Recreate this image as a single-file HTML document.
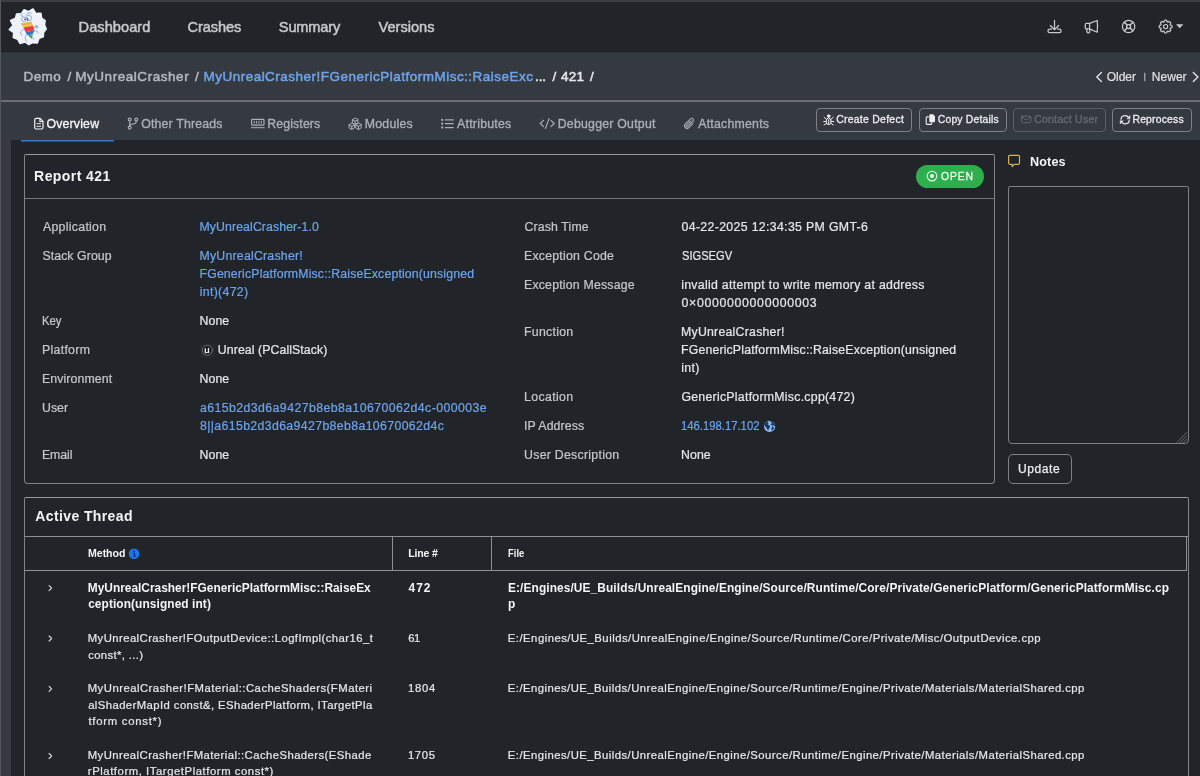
<!DOCTYPE html>
<html lang="en">
<head>
<meta charset="utf-8">
<title>Report 421 - MyUnrealCrasher</title>
<style>
*{box-sizing:border-box;margin:0;padding:0}
html,body{width:1200px;height:776px;overflow:hidden;background:#212529;font-family:"Liberation Sans",sans-serif}
body{position:relative}
#wrap{position:absolute;left:0;top:0;width:1200px;height:776px;will-change:transform;overflow:hidden}
.b{position:absolute}
.t{position:absolute;transform-origin:0 0;white-space:pre;line-height:1;font-family:"Liberation Sans",sans-serif}
svg{position:absolute;overflow:visible}
#nav{left:0;top:0;width:1200px;height:52px;background:#212529}
#crumb{left:0;top:52px;width:1200px;height:48px;background:#353a40}
#crumbline{left:0;top:100px;width:1200px;height:2px;background:#6b6f74}
#tabs{left:0;top:102px;width:1200px;height:38px;background:#353a40}
#leftstrip{left:0;top:140px;width:11px;height:636px;background:#353a40}
#frametop{left:0;top:0;width:1200px;height:2px;background:#3a3d42}
#frameleft{left:0;top:0;width:1px;height:776px;background:#53575b}
#tabline{left:21px;top:140px;width:93px;height:2px;background:linear-gradient(#3a76cc 0,#3a76cc 50%,#214f97 50%,#214f97 100%)}
.btn{position:absolute;border:1px solid #7d8287;border-radius:4px;background:transparent;appearance:none;-webkit-appearance:none;padding:0;margin:0;display:block;outline:0;box-shadow:none}
.card{position:absolute;border:1px solid #80848a;border-top-color:#979b9f;border-radius:2px 2px 4px 4px}
.hl{position:absolute;height:1px;background:#74787d}
.vl{position:absolute;width:1px;background:#8d9196}
</style>
</head>
<body>
<div id="wrap">
<div class="b" id="nav"></div>
<div class="b" id="crumb"></div>
<div class="b" style="left:0;top:52px;width:1200px;height:1px;background:#2b3035"></div>
<div class="b" id="crumbline"></div>
<div class="b" id="tabs"></div>
<div class="b" id="leftstrip"></div>
<div class="b" id="tabline"></div>
<div class="b" id="frametop"></div>
<div class="b" id="frameleft"></div>

<!-- toolbar buttons -->
<button type="button" class="btn" style="left:816px;top:108px;width:96px;height:24px"></button>
<button type="button" class="btn" style="left:919px;top:108px;width:88px;height:24px"></button>
<button type="button" class="btn" style="left:1013px;top:108px;width:93px;height:24px;border-color:#5a5f65"></button>
<button type="button" class="btn" style="left:1112px;top:108px;width:80px;height:24px"></button>

<!-- report card -->
<div class="card" style="left:24px;top:154px;width:971px;height:330px"></div>
<div class="hl" style="left:25px;top:198px;width:969px"></div>
<div class="b" style="left:916px;top:165px;width:68px;height:23px;border-radius:12px;background:#2fae4e"></div>

<!-- notes -->
<textarea class="card" style="left:1008px;top:186px;width:181px;height:258px;border-color:#7d8186;background:transparent;resize:none;outline:0;padding:0;margin:0;display:block;appearance:none;-webkit-appearance:none;overflow:hidden;color:#e4e7ea"></textarea>
<button type="button" class="btn" style="left:1008px;top:454px;width:64px;height:30px;border-radius:5px"></button>

<!-- active thread card -->
<div class="card" style="left:24px;top:497px;width:1165px;height:300px"></div>
<div class="hl" style="left:25px;top:535.5px;width:1163px;background:#8d9196"></div>
<div class="hl" style="left:25px;top:570px;width:1162px;background:#8d9196"></div>
<div class="vl" style="left:392px;top:536px;height:34px"></div>
<div class="vl" style="left:491px;top:536px;height:34px"></div>
<div class="vl" style="left:1186px;top:536px;height:34px"></div>

<svg width="60" height="52" viewBox="0 0 60 52" style="left:0;top:0">
<path d="M24.1 9.7 L28.5 11.7 L33.0 9.0 L35.7 13.5 L40.8 13.2 L41.6 18.1 L45.1 20.7 L44.5 25.0 L46.2 28.9 L43.5 32.4 L43.3 36.8 L39.0 38.3 L37.3 42.9 L32.7 42.6 L28.7 44.5 L25.0 41.9 L20.0 43.4 L17.7 39.2 L13.3 37.5 L13.8 32.6 L9.3 29.5 L13.2 25.3 L10.6 20.5 L15.6 18.3 L16.6 14.0 L21.3 13.6Z" fill="#eef3fb" stroke="#eef3fb" stroke-width="1.6" stroke-linejoin="round"/>
<g fill="none" stroke="#6f8fd6" stroke-width="0.7" stroke-linecap="round" stroke-linejoin="round">
<path d="M23.6 29L20.3 32.2L21.600 35.2M26.400 34L25.200 38L26.300 41.200M33.800 27.500L36.400 25.600L37.300 27.800M34.200 30.800L37.200 31L38.400 33.300M31.600 36.500L33.800 39.500M22.800 16.500L20.600 14.600L21.800 13.600M26.600 15.300L28 12.800L31.200 13.200"/>
<path d="M36.400 25.600a1.300 1.300 0 1 0 .1 0"/>
</g>
<path d="M20.6 23.200L31.200 21.400L33.200 25.800L23.400 27.600Z" fill="#f0c24a"/>
<path d="M21.500 24.600L32 22.900" stroke="#e8a33a" stroke-width="0.8" fill="none"/>
<path d="M23.400 27.600L33.200 25.800L34.300 30.200L25.600 32.200Z" fill="#e2423f"/>
<path d="M25.600 32.200L34.300 30.200L33.200 33.600L28 35.500Z" fill="#2f73c9"/>
<path d="M28.200 35.600L33 33.800L31.600 39Z" fill="#3fae4f"/>
<circle cx="23.900" cy="19.300" r="2.300" fill="#ffffff" stroke="#5f86cf" stroke-width="0.7"/>
<circle cx="28.900" cy="18.100" r="2.600" fill="#ffffff" stroke="#5f86cf" stroke-width="0.7"/>
<circle cx="24.900" cy="19.200" r="0.800" fill="#1f3f7a"/><circle cx="27.800" cy="18.900" r="0.800" fill="#1f3f7a"/>
<path d="M26.300 20.200L28 20L27.300 21.600Z" fill="#d8443f"/>
</svg>
<svg width="1200" height="776" viewBox="0 0 1200 776" style="left:0;top:0" fill="none" stroke-linecap="round" stroke-linejoin="round">
<g stroke="#c6c9cc" stroke-width="1.25">
<path d="M1054.5 20.4V29.4M1050.3 25.5L1054.5 29.7L1058.7 25.5"/>
<path d="M1051.4 29.2H1049.7a1.75 1.75 0 0 0 0 3.5h9.6a1.75 1.75 0 0 0 0-3.5H1057.6"/>
<path d="M1097.2 20.5C1097.6 24 1097.6 28.5 1097.2 32.2L1089.6 28.9H1086.3a1 1 0 0 1-1-1V24.3a1 1 0 0 1 1-1H1089.6Z"/>
<path d="M1089.6 23.5V28.8M1086.9 29V31.8a1 1 0 0 0 1 1h0.8a1 1 0 0 0 1-1V29.2"/>
<circle cx="1128.6" cy="26.5" r="6.2"/><circle cx="1128.6" cy="26.5" r="2"/>
<path d="M1124.3 22.2L1127.1 25M1132.9 22.2L1130.1 25M1124.3 30.8L1127.1 28M1132.9 30.8L1130.1 28" stroke-width="1.6"/>
<path d="M1165.60 20.20 L1165.77 20.20 L1165.93 20.21 L1166.10 20.22 L1166.27 20.24 L1166.43 20.27 L1166.60 20.32 L1166.74 20.43 L1166.86 20.69 L1166.91 21.13 L1166.96 21.53 L1167.03 21.76 L1167.14 21.88 L1167.25 21.95 L1167.37 22.00 L1167.48 22.05 L1167.60 22.10 L1167.73 22.14 L1167.86 22.17 L1168.01 22.16 L1168.22 22.06 L1168.54 21.80 L1168.89 21.53 L1169.16 21.43 L1169.34 21.45 L1169.49 21.53 L1169.62 21.63 L1169.76 21.73 L1169.88 21.84 L1170.00 21.96 L1170.13 22.07 L1170.24 22.20 L1170.36 22.32 L1170.47 22.44 L1170.57 22.58 L1170.67 22.71 L1170.75 22.86 L1170.77 23.04 L1170.67 23.31 L1170.40 23.66 L1170.14 23.98 L1170.04 24.19 L1170.03 24.34 L1170.06 24.47 L1170.10 24.60 L1170.15 24.72 L1170.20 24.83 L1170.25 24.95 L1170.32 25.06 L1170.44 25.17 L1170.67 25.24 L1171.07 25.29 L1171.51 25.34 L1171.77 25.46 L1171.88 25.60 L1171.93 25.77 L1171.96 25.93 L1171.98 26.10 L1171.99 26.27 L1172.00 26.43 L1172.00 26.60 L1172.00 26.77 L1171.99 26.93 L1171.98 27.10 L1171.96 27.27 L1171.93 27.43 L1171.88 27.60 L1171.77 27.74 L1171.51 27.86 L1171.07 27.91 L1170.67 27.96 L1170.44 28.03 L1170.32 28.14 L1170.25 28.25 L1170.20 28.37 L1170.15 28.48 L1170.10 28.60 L1170.06 28.73 L1170.03 28.86 L1170.04 29.01 L1170.14 29.22 L1170.40 29.54 L1170.67 29.89 L1170.77 30.16 L1170.75 30.34 L1170.67 30.49 L1170.57 30.62 L1170.47 30.76 L1170.36 30.88 L1170.24 31.00 L1170.13 31.13 L1170.00 31.24 L1169.88 31.36 L1169.76 31.47 L1169.62 31.57 L1169.49 31.67 L1169.34 31.75 L1169.16 31.77 L1168.89 31.67 L1168.54 31.40 L1168.22 31.14 L1168.01 31.04 L1167.86 31.03 L1167.73 31.06 L1167.60 31.10 L1167.48 31.15 L1167.37 31.20 L1167.25 31.25 L1167.14 31.32 L1167.03 31.44 L1166.96 31.67 L1166.91 32.07 L1166.86 32.51 L1166.74 32.77 L1166.60 32.88 L1166.43 32.93 L1166.27 32.96 L1166.10 32.98 L1165.93 32.99 L1165.77 33.00 L1165.60 33.00 L1165.43 33.00 L1165.27 32.99 L1165.10 32.98 L1164.93 32.96 L1164.77 32.93 L1164.60 32.88 L1164.46 32.77 L1164.34 32.51 L1164.29 32.07 L1164.24 31.67 L1164.17 31.44 L1164.06 31.32 L1163.95 31.25 L1163.83 31.20 L1163.72 31.15 L1163.60 31.10 L1163.47 31.06 L1163.34 31.03 L1163.19 31.04 L1162.98 31.14 L1162.66 31.40 L1162.31 31.67 L1162.04 31.77 L1161.86 31.75 L1161.71 31.67 L1161.58 31.57 L1161.44 31.47 L1161.32 31.36 L1161.20 31.24 L1161.07 31.13 L1160.96 31.00 L1160.84 30.88 L1160.73 30.76 L1160.63 30.62 L1160.53 30.49 L1160.45 30.34 L1160.43 30.16 L1160.53 29.89 L1160.80 29.54 L1161.06 29.22 L1161.16 29.01 L1161.17 28.86 L1161.14 28.73 L1161.10 28.60 L1161.05 28.48 L1161.00 28.37 L1160.95 28.25 L1160.88 28.14 L1160.76 28.03 L1160.53 27.96 L1160.13 27.91 L1159.69 27.86 L1159.43 27.74 L1159.32 27.60 L1159.27 27.43 L1159.24 27.27 L1159.22 27.10 L1159.21 26.93 L1159.20 26.77 L1159.20 26.60 L1159.20 26.43 L1159.21 26.27 L1159.22 26.10 L1159.24 25.93 L1159.27 25.77 L1159.32 25.60 L1159.43 25.46 L1159.69 25.34 L1160.13 25.29 L1160.53 25.24 L1160.76 25.17 L1160.88 25.06 L1160.95 24.95 L1161.00 24.83 L1161.05 24.72 L1161.10 24.60 L1161.14 24.47 L1161.17 24.34 L1161.16 24.19 L1161.06 23.98 L1160.80 23.66 L1160.53 23.31 L1160.43 23.04 L1160.45 22.86 L1160.53 22.71 L1160.63 22.58 L1160.73 22.44 L1160.84 22.32 L1160.96 22.20 L1161.07 22.07 L1161.20 21.96 L1161.32 21.84 L1161.44 21.73 L1161.58 21.63 L1161.71 21.53 L1161.86 21.45 L1162.04 21.43 L1162.31 21.53 L1162.66 21.80 L1162.98 22.06 L1163.19 22.16 L1163.34 22.17 L1163.47 22.14 L1163.60 22.10 L1163.72 22.05 L1163.83 22.00 L1163.95 21.95 L1164.06 21.88 L1164.17 21.76 L1164.24 21.53 L1164.29 21.13 L1164.34 20.69 L1164.46 20.43 L1164.60 20.32 L1164.77 20.27 L1164.93 20.24 L1165.10 20.22 L1165.27 20.21 L1165.43 20.20Z" stroke-width="1.2"/><circle cx="1165.6" cy="26.6" r="2.1" stroke-width="1.2"/>
</g>
<path d="M1176 24.2H1183.4L1179.7 28.2Z" fill="#c6c9cc"/>
<g stroke="#dfe2e5" stroke-width="1.4"><path d="M1101.4 72.4L1096.8 77L1101.4 81.6"/><path d="M1193.3 72.4L1197.9 77L1193.3 81.6"/></g>
<path d="M1144.8 73.2V80.8" stroke="#c4c8cc" stroke-width="1"/>
<g stroke="#f4f5f6" stroke-width="1.2">
<path d="M36.2 118.4H40.1L43 121.3V127.5a1.5 1.5 0 0 1-1.5 1.5H36.2a1.5 1.5 0 0 1-1.5-1.5V119.9a1.5 1.5 0 0 1 1.5-1.5Z"/>
<path d="M39.9 118.6V121.5H42.8" stroke-width="1.1"/><path d="M37 123.600H40.700M37 126.300H40.700" stroke-width="0.9"/>
</g>
<g stroke="#aab0b7" stroke-width="1.15">
<circle cx="129.7" cy="119.5" r="1.45"/><circle cx="136.3" cy="119.5" r="1.45"/><circle cx="129.7" cy="127.6" r="1.45"/>
<path d="M129.7 121V126.1M136.3 121C136.3 123.4 134.6 123.9 132.9 124C131 124.1 129.9 124.6 129.7 126"/>
<rect x="251.6" y="119.300" width="12.4" height="5.800" rx="0.9"/>
<path d="M254.2 121.200V123.300M256.6 121.200V123.300M259 121.200V123.300M261.4 121.200V123.300M251.400 127.700H264.200" stroke-width="1"/>
<path d="M355.10 118.15 L352.37 119.72 L352.37 122.88 L355.10 124.45 L357.83 122.88 L357.83 119.72Z M355.10 121.30 L352.37 119.72 M355.10 121.30 L357.83 119.72 M355.10 121.30 L355.10 124.45" stroke-width="1"/>
<path d="M351.75 123.20 L349.02 124.77 L349.02 127.92 L351.75 129.50 L354.48 127.92 L354.48 124.77Z M351.75 126.35 L349.02 124.77 M351.75 126.35 L354.48 124.77 M351.75 126.35 L351.75 129.50" stroke-width="1"/>
<path d="M358.45 123.20 L355.72 124.77 L355.72 127.92 L358.45 129.50 L361.18 127.92 L361.18 124.77Z M358.45 126.35 L355.72 124.77 M358.45 126.35 L361.18 124.77 M358.45 126.35 L358.45 129.50" stroke-width="1"/>
<path d="M445.4 119.9H453.2M445.4 123.7H453.2M445.4 127.5H453.2" stroke-width="1.25"/>
<path d="M543.6 120.4L540.3 123.5L543.6 126.6M550.9 120.4L554.2 123.5L550.9 126.6M549 118.6L545.5 128.4" stroke-width="1.2"/>
</g>
<g fill="#aab0b7"><circle cx="442.2" cy="119.9" r="1.15"/><circle cx="442.2" cy="123.7" r="1.15"/><circle cx="442.2" cy="127.5" r="1.15"/></g>
<path transform="translate(689.4 123.5) rotate(45) scale(0.84) translate(-8 -8)" fill="#aab0b7" stroke="#aab0b7" stroke-width="0.35" d="M4.5 3a2.5 2.5 0 0 1 5 0v9a1.5 1.5 0 0 1-3 0V5a.5.5 0 0 1 1 0v7a.5.5 0 0 0 1 0V3a1.5 1.5 0 1 0-3 0v9a2.5 2.5 0 0 0 5 0V5a.5.5 0 0 1 1 0v7a3.5 3.5 0 1 1-7 0z"/>
<g stroke="#eceef0" stroke-width="1">
<circle cx="828.7" cy="116.1" r="1.3" fill="#eceef0"/>
<ellipse cx="828.7" cy="121.3" rx="2.5" ry="3.3"/>
<path d="M828.7 119.6V124.4M826.4 119.4L824.1 117.2M826.2 121.5H823.7M826.5 123.4L824.1 125M831 119.4L833.3 117.2M831.2 121.5H833.7M830.9 123.4L833.3 125"/>
<path d="M928.3 116.9H927.2a1 1 0 0 0-1 1V123.4a1 1 0 0 0 1 1H930.7a1 1 0 0 0 1-1V122.9" stroke-width="1.1"/>
</g>
<path d="M930.2 114.3H933L935 116.3V121.3a.9.9 0 0 1-.9.9H930.2a.9.9 0 0 1-.9-.9V115.2a.9.9 0 0 1 .9-.9Z" fill="#eceef0"/>
<g stroke="#656a70" stroke-width="1"><rect x="1021.4" y="116.1" width="9.5" height="6.6" rx="1.1"/><path d="M1021.7 117L1026.15 120L1030.6 117"/></g>
<g stroke="#eceef0" stroke-width="1.15"><path d="M1121 119.3A4 3.6 0 0 1 1128.4 117.3"/><path d="M1129.2 120.2A4 3.6 0 0 1 1121.8 122.2"/></g>
<path d="M1127.3 118.6L1130 115.6V118.6Z" fill="#eceef0" stroke="#eceef0" stroke-width="0.5"/>
<path d="M1122.9 120.9L1120.2 123.9V120.9Z" fill="#eceef0" stroke="#eceef0" stroke-width="0.5"/>
<circle cx="932" cy="176.1" r="4.8" stroke="#e3f6e8" stroke-width="1.1"/><circle cx="932" cy="176.1" r="2.1" fill="#e3f6e8"/>
<path d="M1009.8 155.3H1018.3a1.2 1.2 0 0 1 1.2 1.2V163.1a1.2 1.2 0 0 1-1.2 1.2H1014.1L1012.2 166.6L1012.1 164.3H1009.8a1.2 1.2 0 0 1-1.2-1.2V156.5a1.2 1.2 0 0 1 1.2-1.2Z" stroke="#d9b05a" stroke-width="1.2"/>
<rect x="200.3" y="343.6" width="13.8" height="13.8" fill="#262a2e" rx="1"/>
<circle cx="207.25" cy="350.3" r="5" fill="#16181b" stroke="#7d8185" stroke-width="0.8"/>
<path d="M204.7 348.6L205.9 347.9V351.6c0 .9 1.3 .9 1.9 .1V348.3l1.3-.6V352l.7 .3-1.7 1-.3-.6c-1 .8-3.2 .9-3.2-1V348.9Z" fill="#f2f2f2"/>
<circle cx="769.6" cy="426.4" r="5.6" fill="#8ebcf2"/>
<path d="M767.2 422.1c1 .2 1.2 1 .6 1.6-.8.7-.2 1.4.7 1.5 1 .2 1.6 1 1 2-.5.9-1 1.6-1.3 2.6-1.2-.4-1-1.700-1.6-2.500-.7-.9-2-1-1.900-2.300.1-1.200 1.200-2.300 2.500-2.900Z" fill="#17345f" stroke="#17345f" stroke-width="0.7" stroke-linejoin="round"/>
<path d="M770.5 421.2c.3.700 1.400.6 1.600 1.500.2 1-.9 1-1 1.800 0 .7.900.7 1.500.6.800-.1 1.500.3 1.900 1 .3-1.900-1.200-4.300-4-4.900Z" fill="#17345f" stroke="#17345f" stroke-width="0.7" stroke-linejoin="round"/>
<path d="M772.400 427c.7 0 1.200.5 1.100 1.200-.2.900-.9 1.500-1.700 1.900-.2-1 .1-2 .6-3.100Z" fill="#17345f" stroke="#17345f" stroke-width="0.7" stroke-linejoin="round"/>
<circle cx="134" cy="553.8" r="5.3" fill="#1b77ee"/>
<circle cx="134" cy="551.3" r="0.8" fill="#14233d"/><path d="M133 553.100H134.700V556.200M133 556.400H135.400" stroke="#14233d" stroke-width="0.9" stroke-linecap="butt"/>
<g stroke="#d5d8db" stroke-width="1.15">
<path d="M49.1 585.6L51.6 588.1L49.1 590.6"/>
<path d="M49.1 636.0L51.6 638.5L49.1 641.0"/>
<path d="M49.1 686.3L51.6 688.8L49.1 691.3"/>
<path d="M49.1 753.5L51.6 756.0L49.1 758.5"/>
</g>
<path d="M1186.8 432.4L1177 442.6M1186.8 435.8L1180.200 442.600M1186.8 439.200L1183.500 442.600" stroke="#8a8e93" stroke-width="0.7"/>
</svg>

<a class="t" style="left:78.56px;top:20px;font-size:14.6px;color:#c6c8ca;-webkit-text-stroke:0.5px #c6c8ca;letter-spacing:0.054px;">Dashboard</a>
<a class="t" style="left:187.62px;top:20px;font-size:14.6px;color:#c6c8ca;-webkit-text-stroke:0.5px #c6c8ca;letter-spacing:-0.121px;">Crashes</a>
<a class="t" style="left:278.84px;top:20px;font-size:14.6px;color:#c6c8ca;-webkit-text-stroke:0.5px #c6c8ca;letter-spacing:-0.168px;">Summary</a>
<a class="t" style="left:378.50px;top:20px;font-size:14.6px;color:#c6c8ca;-webkit-text-stroke:0.5px #c6c8ca;letter-spacing:0.008px;">Versions</a>
<a class="t" style="left:23.45px;top:70px;font-size:13.5px;color:#b4b9bf;-webkit-text-stroke:0.5px #b4b9bf;letter-spacing:0.464px;">Demo</a>
<a class="t" style="left:67.50px;top:70px;font-size:13.5px;color:#b4b9bf;-webkit-text-stroke:0.5px #b4b9bf;">/</a>
<a class="t" style="left:75.20px;top:70px;font-size:13.5px;color:#b4b9bf;-webkit-text-stroke:0.5px #b4b9bf;letter-spacing:0.549px;">MyUnrealCrasher</a>
<a class="t" style="left:195.00px;top:70px;font-size:13.5px;color:#b4b9bf;-webkit-text-stroke:0.5px #b4b9bf;">/</a>
<a class="t" style="left:203.45px;top:70px;font-size:13.5px;color:#6ea3e9;-webkit-text-stroke:0.5px #6ea3e9;letter-spacing:0.490px;">MyUnrealCrasher!FGenericPlatformMisc::RaiseExc</a>
<a class="t" style="left:534.95px;top:70px;font-size:13.5px;color:#e4e7ea;-webkit-text-stroke:0.5px #e4e7ea;letter-spacing:-0.039px;">...</a>
<a class="t" style="left:552.50px;top:70px;font-size:13.5px;color:#e4e7ea;-webkit-text-stroke:0.5px #e4e7ea;">/</a>
<a class="t" style="left:561.04px;top:70px;font-size:13.5px;color:#e4e7ea;-webkit-text-stroke:0.5px #e4e7ea;letter-spacing:0.167px;">421</a>
<a class="t" style="left:590.00px;top:70px;font-size:13.5px;color:#e4e7ea;-webkit-text-stroke:0.5px #e4e7ea;">/</a>
<a class="t" style="left:1106.75px;top:71px;font-size:12px;color:#dfe2e5;-webkit-text-stroke:0.2px #dfe2e5;letter-spacing:-0.024px;">Older</a>
<a class="t" style="left:1151.75px;top:71px;font-size:12px;color:#dfe2e5;-webkit-text-stroke:0.2px #dfe2e5;letter-spacing:0.043px;">Newer</a>
<a class="t" style="left:46.45px;top:118px;font-size:12.3px;color:#f4f5f6;-webkit-text-stroke:0.35px #f4f5f6;letter-spacing:0.189px;">Overview</a>
<a class="t" style="left:141.20px;top:118px;font-size:12.3px;color:#aab0b7;-webkit-text-stroke:0.35px #aab0b7;letter-spacing:0.187px;">Other Threads</a>
<a class="t" style="left:267.25px;top:118px;font-size:12.3px;color:#aab0b7;-webkit-text-stroke:0.35px #aab0b7;letter-spacing:0.131px;">Registers</a>
<a class="t" style="left:364.75px;top:118px;font-size:12.3px;color:#aab0b7;-webkit-text-stroke:0.35px #aab0b7;letter-spacing:0.251px;">Modules</a>
<a class="t" style="left:457.00px;top:118px;font-size:12.3px;color:#aab0b7;-webkit-text-stroke:0.35px #aab0b7;letter-spacing:0.255px;">Attributes</a>
<a class="t" style="left:557.75px;top:118px;font-size:12.3px;color:#aab0b7;-webkit-text-stroke:0.35px #aab0b7;letter-spacing:0.236px;">Debugger Output</a>
<a class="t" style="left:698.25px;top:118px;font-size:12.3px;color:#aab0b7;-webkit-text-stroke:0.35px #aab0b7;letter-spacing:0.239px;">Attachments</a>
<a class="t" style="left:836.20px;top:115px;font-size:10.4px;color:#eceef0;-webkit-text-stroke:0.3px #eceef0;letter-spacing:0.290px;">Create Defect</a>
<a class="t" style="left:937.80px;top:115px;font-size:10.4px;color:#eceef0;-webkit-text-stroke:0.3px #eceef0;letter-spacing:0.172px;">Copy Details</a>
<a class="t" style="left:1034.20px;top:115px;font-size:10.4px;color:#666b71;-webkit-text-stroke:0.3px #666b71;letter-spacing:0.280px;">Contact User</a>
<a class="t" style="left:1132.45px;top:115px;font-size:10.4px;color:#eceef0;-webkit-text-stroke:0.3px #eceef0;letter-spacing:0.186px;">Reprocess</a>
<span class="t" style="left:34.12px;top:169px;font-size:14px;color:#f4f5f6;font-weight:700;letter-spacing:0.418px;">Report 421</span>
<span class="t" style="left:941.05px;top:172px;font-size:10.4px;color:#e9f7ec;-webkit-text-stroke:0.35px #e9f7ec;letter-spacing:0.796px;">OPEN</span>
<span class="t" style="left:1029.90px;top:156px;font-size:12.6px;color:#f4f5f6;font-weight:700;letter-spacing:0.175px;">Notes</span>
<span class="t" style="left:1018.10px;top:463px;font-size:12px;color:#eceef0;-webkit-text-stroke:0.25px #eceef0;letter-spacing:0.566px;">Update</span>
<span class="t" style="left:43.00px;top:221px;font-size:12.3px;color:#c3c8cd;-webkit-text-stroke:0.22px #c3c8cd;letter-spacing:0.292px;">Application</span>
<span class="t" style="left:42.45px;top:250px;font-size:12.3px;color:#c3c8cd;-webkit-text-stroke:0.22px #c3c8cd;letter-spacing:0.078px;">Stack Group</span>
<span class="t" style="left:42.08px;top:315px;font-size:12.3px;color:#c3c8cd;-webkit-text-stroke:0.22px #c3c8cd;transform:scaleX(0.9210);">Key</span>
<span class="t" style="left:42.00px;top:344px;font-size:12.3px;color:#c3c8cd;-webkit-text-stroke:0.22px #c3c8cd;letter-spacing:0.300px;">Platform</span>
<span class="t" style="left:42.00px;top:373px;font-size:12.3px;color:#c3c8cd;-webkit-text-stroke:0.22px #c3c8cd;letter-spacing:0.112px;">Environment</span>
<span class="t" style="left:42.10px;top:402px;font-size:12.3px;color:#c3c8cd;-webkit-text-stroke:0.22px #c3c8cd;letter-spacing:-0.008px;">User</span>
<span class="t" style="left:42.00px;top:449px;font-size:12.3px;color:#c3c8cd;-webkit-text-stroke:0.22px #c3c8cd;letter-spacing:-0.093px;">Email</span>
<a class="t" style="left:199.50px;top:221px;font-size:12.3px;color:#6ea3e9;-webkit-text-stroke:0.22px #6ea3e9;letter-spacing:0.096px;">MyUnrealCrasher-1.0</a>
<a class="t" style="left:199.50px;top:250px;font-size:12.3px;color:#6ea3e9;-webkit-text-stroke:0.22px #6ea3e9;letter-spacing:0.228px;">MyUnrealCrasher!</a>
<a class="t" style="left:199.50px;top:268px;font-size:12.3px;color:#6ea3e9;-webkit-text-stroke:0.22px #6ea3e9;letter-spacing:0.151px;">FGenericPlatformMisc::RaiseException(unsigned</a>
<a class="t" style="left:199.70px;top:286px;font-size:12.3px;color:#6ea3e9;-webkit-text-stroke:0.22px #6ea3e9;letter-spacing:0.324px;">int)(472)</a>
<span class="t" style="left:199.50px;top:315px;font-size:12.3px;color:#e4e7ea;-webkit-text-stroke:0.22px #e4e7ea;letter-spacing:0.079px;">None</span>
<span class="t" style="left:217.85px;top:344px;font-size:12.3px;color:#e4e7ea;-webkit-text-stroke:0.22px #e4e7ea;letter-spacing:0.083px;">Unreal (PCallStack)</span>
<span class="t" style="left:199.50px;top:373px;font-size:12.3px;color:#e4e7ea;-webkit-text-stroke:0.22px #e4e7ea;letter-spacing:0.079px;">None</span>
<a class="t" style="left:200.00px;top:402px;font-size:12.3px;color:#6ea3e9;-webkit-text-stroke:0.22px #6ea3e9;letter-spacing:0.422px;">a615b2d3d6a9427b8eb8a10670062d4c-000003e</a>
<a class="t" style="left:200.00px;top:420px;font-size:12.3px;color:#6ea3e9;-webkit-text-stroke:0.22px #6ea3e9;letter-spacing:0.366px;">8||a615b2d3d6a9427b8eb8a10670062d4c</a>
<span class="t" style="left:199.50px;top:449px;font-size:12.3px;color:#e4e7ea;-webkit-text-stroke:0.22px #e4e7ea;letter-spacing:0.079px;">None</span>
<span class="t" style="left:524.40px;top:221px;font-size:12.3px;color:#c3c8cd;-webkit-text-stroke:0.22px #c3c8cd;letter-spacing:0.154px;">Crash Time</span>
<span class="t" style="left:524.00px;top:250px;font-size:12.3px;color:#c3c8cd;-webkit-text-stroke:0.22px #c3c8cd;letter-spacing:0.235px;">Exception Code</span>
<span class="t" style="left:524.00px;top:279px;font-size:12.3px;color:#c3c8cd;-webkit-text-stroke:0.22px #c3c8cd;letter-spacing:0.206px;">Exception Message</span>
<span class="t" style="left:524.00px;top:326px;font-size:12.3px;color:#c3c8cd;-webkit-text-stroke:0.22px #c3c8cd;letter-spacing:0.281px;">Function</span>
<span class="t" style="left:524.00px;top:391px;font-size:12.3px;color:#c3c8cd;-webkit-text-stroke:0.22px #c3c8cd;letter-spacing:0.377px;">Location</span>
<span class="t" style="left:523.90px;top:420px;font-size:12.3px;color:#c3c8cd;-webkit-text-stroke:0.22px #c3c8cd;letter-spacing:0.104px;">IP Address</span>
<span class="t" style="left:524.10px;top:449px;font-size:12.3px;color:#c3c8cd;-webkit-text-stroke:0.22px #c3c8cd;letter-spacing:0.275px;">User Description</span>
<span class="t" style="left:681.55px;top:221px;font-size:12.3px;color:#e4e7ea;-webkit-text-stroke:0.22px #e4e7ea;letter-spacing:0.343px;">04-22-2025 12:34:35 PM GMT-6</span>
<span class="t" style="left:681.50px;top:250px;font-size:12.3px;color:#e4e7ea;-webkit-text-stroke:0.22px #e4e7ea;transform:scaleX(0.9057);">SIGSEGV</span>
<span class="t" style="left:681.20px;top:279px;font-size:12.3px;color:#e4e7ea;-webkit-text-stroke:0.22px #e4e7ea;letter-spacing:0.299px;">invalid attempt to write memory at address</span>
<span class="t" style="left:681.55px;top:297px;font-size:12.3px;color:#e4e7ea;-webkit-text-stroke:0.22px #e4e7ea;letter-spacing:0.683px;">0×0000000000000003</span>
<span class="t" style="left:681.00px;top:326px;font-size:12.3px;color:#e4e7ea;-webkit-text-stroke:0.22px #e4e7ea;letter-spacing:0.245px;">MyUnrealCrasher!</span>
<span class="t" style="left:681.00px;top:344px;font-size:12.3px;color:#e4e7ea;-webkit-text-stroke:0.22px #e4e7ea;letter-spacing:0.163px;">FGenericPlatformMisc::RaiseException(unsigned</span>
<span class="t" style="left:681.20px;top:362px;font-size:12.3px;color:#e4e7ea;-webkit-text-stroke:0.22px #e4e7ea;letter-spacing:0.353px;">int)</span>
<span class="t" style="left:681.40px;top:391px;font-size:12.3px;color:#e4e7ea;-webkit-text-stroke:0.22px #e4e7ea;letter-spacing:0.272px;">GenericPlatformMisc.cpp(472)</span>
<a class="t" style="left:681.17px;top:420px;font-size:12.3px;color:#6ea3e9;-webkit-text-stroke:0.22px #6ea3e9;transform:scaleX(0.9178);">146.198.17.102</a>
<span class="t" style="left:681.00px;top:449px;font-size:12.3px;color:#e4e7ea;-webkit-text-stroke:0.22px #e4e7ea;letter-spacing:0.079px;">None</span>
<span class="t" style="left:35.28px;top:509px;font-size:14px;color:#f4f5f6;font-weight:700;letter-spacing:0.386px;">Active Thread</span>
<span class="t" style="left:88.10px;top:548px;font-size:10.6px;color:#f4f5f6;font-weight:700;letter-spacing:-0.081px;">Method</span>
<span class="t" style="left:408.20px;top:548px;font-size:10.6px;color:#f4f5f6;font-weight:700;letter-spacing:-0.167px;">Line #</span>
<span class="t" style="left:508.13px;top:548px;font-size:10.6px;color:#f4f5f6;font-weight:700;transform:scaleX(0.8917);">File</span>
<span class="t" style="left:87.85px;top:583px;font-size:11.9px;color:#f4f5f6;font-weight:700;">MyUnrealCrasher!FGenericPlatformMisc::RaiseEx</span>
<span class="t" style="left:88.15px;top:599px;font-size:11.9px;color:#f4f5f6;font-weight:700;letter-spacing:0.092px;">ception(unsigned int)</span>
<span class="t" style="left:408.60px;top:583px;font-size:11.9px;color:#f4f5f6;font-weight:700;letter-spacing:0.932px;">472</span>
<span class="t" style="left:508.00px;top:583px;font-size:11.9px;color:#f4f5f6;font-weight:700;letter-spacing:0.101px;">E:/Engines/UE_Builds/UnrealEngine/Engine/Source/Runtime/Core/Private/GenericPlatform/GenericPlatformMisc.cp</span>
<span class="t" style="left:508.00px;top:599px;font-size:11.9px;color:#f4f5f6;font-weight:700;">p</span>
<span class="t" style="left:87.70px;top:633px;font-size:11.3px;color:#e4e7ea;-webkit-text-stroke:0.22px #e4e7ea;letter-spacing:0.443px;">MyUnrealCrasher!FOutputDevice::LogfImpl(char16_t</span>
<span class="t" style="left:88.15px;top:650px;font-size:11.3px;color:#e4e7ea;-webkit-text-stroke:0.22px #e4e7ea;letter-spacing:0.359px;">const*, ...)</span>
<span class="t" style="left:408.20px;top:633px;font-size:11.3px;color:#e4e7ea;-webkit-text-stroke:0.22px #e4e7ea;letter-spacing:-0.385px;">61</span>
<span class="t" style="left:507.85px;top:633px;font-size:11.3px;color:#e4e7ea;-webkit-text-stroke:0.22px #e4e7ea;letter-spacing:0.483px;">E:/Engines/UE_Builds/UnrealEngine/Engine/Source/Runtime/Core/Private/Misc/OutputDevice.cpp</span>
<span class="t" style="left:87.70px;top:683px;font-size:11.3px;color:#e4e7ea;-webkit-text-stroke:0.22px #e4e7ea;letter-spacing:0.491px;">MyUnrealCrasher!FMaterial::CacheShaders(FMateri</span>
<span class="t" style="left:88.15px;top:700px;font-size:11.3px;color:#e4e7ea;-webkit-text-stroke:0.22px #e4e7ea;letter-spacing:0.424px;">alShaderMapId const&amp;, EShaderPlatform, ITargetPla</span>
<span class="t" style="left:88.45px;top:716px;font-size:11.3px;color:#e4e7ea;-webkit-text-stroke:0.22px #e4e7ea;letter-spacing:0.747px;">tform const*)</span>
<span class="t" style="left:407.90px;top:683px;font-size:11.3px;color:#e4e7ea;-webkit-text-stroke:0.22px #e4e7ea;letter-spacing:0.782px;">1804</span>
<span class="t" style="left:507.85px;top:683px;font-size:11.3px;color:#e4e7ea;-webkit-text-stroke:0.22px #e4e7ea;letter-spacing:0.462px;">E:/Engines/UE_Builds/UnrealEngine/Engine/Source/Runtime/Engine/Private/Materials/MaterialShared.cpp</span>
<span class="t" style="left:87.70px;top:750px;font-size:11.3px;color:#e4e7ea;-webkit-text-stroke:0.22px #e4e7ea;letter-spacing:0.440px;">MyUnrealCrasher!FMaterial::CacheShaders(EShade</span>
<span class="t" style="left:87.85px;top:766px;font-size:11.3px;color:#e4e7ea;-webkit-text-stroke:0.22px #e4e7ea;letter-spacing:0.560px;">rPlatform, ITargetPlatform const*)</span>
<span class="t" style="left:407.90px;top:750px;font-size:11.3px;color:#e4e7ea;-webkit-text-stroke:0.22px #e4e7ea;letter-spacing:0.665px;">1705</span>
<span class="t" style="left:507.85px;top:750px;font-size:11.3px;color:#e4e7ea;-webkit-text-stroke:0.22px #e4e7ea;letter-spacing:0.462px;">E:/Engines/UE_Builds/UnrealEngine/Engine/Source/Runtime/Engine/Private/Materials/MaterialShared.cpp</span>
</div>
</body>
</html>
